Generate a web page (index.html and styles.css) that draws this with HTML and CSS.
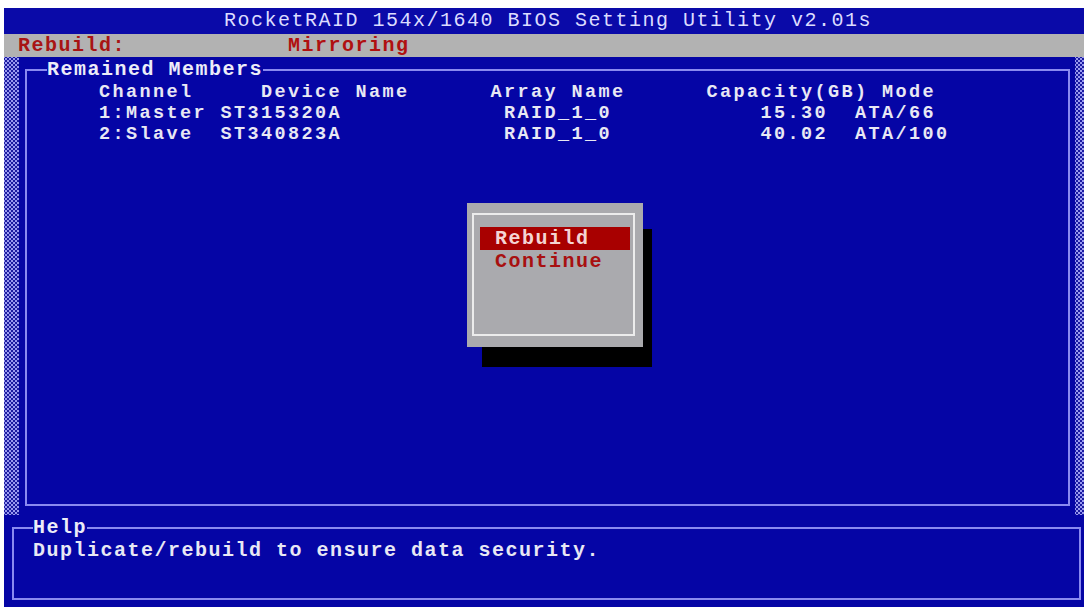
FILE: index.html
```html
<!DOCTYPE html>
<html lang="en">
  <head>
    <meta charset="UTF-8" />
    <title>RocketRAID BIOS Setting Utility</title>
    <link rel="stylesheet" href="styles.css">
  </head>
  <body>
    <div class="screen">
      <div class="title">RocketRAID 154x/1640 BIOS Setting Utility v2.01s</div>
      <div class="status"><span class="label">Rebuild:</span>            <span class="mode">Mirroring</span></div>

      <div class="main">
        <div class="dots dots-left"></div>
        <fieldset class="members">
          <legend>Remained Members</legend>
          <div class="rows">
            <div class="row">Channel     Device Name      Array Name      Capacity(GB) Mode</div>
            <div class="row">1:Master ST315320A            RAID_1_0           15.30  ATA/66</div>
            <div class="row">2:Slave  ST340823A            RAID_1_0           40.02  ATA/100</div>
          </div>
        </fieldset>
        <div class="dots dots-right"></div>
      </div>

      <fieldset class="help">
        <legend>Help</legend>
        <div class="help-text">Duplicate/rebuild to ensure data security.</div>
      </fieldset>

      <!-- popup menu -->
      <div class="dialog">
        <div class="dialog-frame">
          <div class="item selected">Rebuild</div>
          <div class="item">Continue</div>
        </div>
      </div>
    </div>
  </body>
</html>
```

FILE: styles.css
```css
/* text mode screen, 13.5px per column */
body {
  margin: 0;
  padding: 8px 0 0 4px;
  background-color: #fff;
  font-family: "Liberation Mono", "DejaVu Sans Mono", monospace;
  font-weight: bold;
  font-size: 20px;
  letter-spacing: 1.5px;
  overflow: hidden;
}

.screen {
  position: relative;
  width: 1080px;
  height: 599px;
  background-color: #0505a5;
}

.title {
  height: 26px;
  line-height: 26px;
  padding-left: 220px;
  background-color: #0a0aa8;
  color: #dcdcff;
  font-weight: normal;
  white-space: pre;
}

.status {
  height: 23px;
  line-height: 23px;
  padding-left: 14px;
  background-color: #b2b2b2;
  white-space: pre;
}

.status .label {
  color: #a81414;
}

.status .mode {
  color: #b01010;
}

.main {
  display: flex;
  height: 460px;
}

.dots {
  height: 458px;
  background-color: #1a1aa0;
  background-image:
    radial-gradient(circle, #9a9af0 0.9px, transparent 1.5px),
    radial-gradient(circle, #9a9af0 0.9px, transparent 1.5px);
  background-size: 4px 4px;
  background-position: 0 0, 2px 2px;
}

.dots-left {
  width: 15px;
}

.dots-right {
  width: 9px;
}

fieldset {
  margin: 0;
  padding: 0;
  border: 2px solid #8a8af0;
  box-sizing: border-box;
}

legend {
  padding: 0;
  line-height: 20px;
  color: #ececf8;
}

.members {
  width: 1045px;
  height: 446px;
  margin: 3px 5px 0 6px;
}

.members legend {
  margin-left: 20px;
}

.rows {
  padding: 2px 0 0 72px;
  font-size: 18.5px;
  letter-spacing: 2.4px;
}

.row {
  line-height: 21px;
  color: #e8e8f4;
  white-space: pre;
}

.help {
  width: 1069px;
  height: 82px;
  margin: 1px 0 0 8px;
}

.help legend {
  margin-left: 19px;
}

.help-text {
  padding: 3px 0 0 19px;
  line-height: 20px;
  color: #e8e8f4;
}

.dialog {
  position: absolute;
  left: 463px;
  top: 195px;
  width: 176px;
  height: 144px;
  padding: 10px 8px 11px 5px;
  box-sizing: border-box;
  background-color: #aaaaae;
  box-shadow: 12px 23px 0 -3px #000;
}

.dialog-frame {
  height: 100%;
  padding: 12px 3px 0 6px;
  box-sizing: border-box;
  border: 2px solid #ececec;
}

.item {
  height: 23px;
  line-height: 23px;
  padding-left: 15px;
  color: #a81010;
}

.item.selected {
  background-color: #a80000;
  color: #f4d4d4;
}
```
